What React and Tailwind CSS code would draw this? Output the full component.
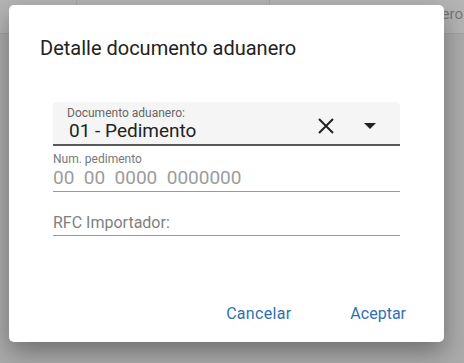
import React from 'react';

const ClearIcon = () => (
  <svg width="18" height="18" viewBox="0 0 18 18" fill="none">
    <path d="M2 2 L16 16 M16 2 L2 16" stroke="#222" strokeWidth="2" />
  </svg>
);

const CaretIcon = () => (
  <svg width="12" height="6" viewBox="0 0 12 6">
    <path d="M0 0 L12 0 L6 6 Z" fill="#222" />
  </svg>
);

const App = () => {
  return (
    <div className="relative w-[464px] h-[363px] overflow-hidden bg-[#ababab]" style={{ fontFamily: 'Roboto, "Liberation Sans", sans-serif' }}>
      {/* Page behind the backdrop */}
      <div className="flex h-[34px] bg-[#b4b4b4] border-b border-[#a2a2a2]">
        <div className="w-[77px] border-r border-[#a6a6a6]" />
        <div className="w-[193px] border-r border-[#a6a6a6]" />
        <div className="flex-1 flex justify-end items-start pt-[5px] pr-[1px] text-[15px] leading-[18px] text-[#777]">
          <span>ero</span>
        </div>
      </div>

      {/* Dialog */}
      <div className="absolute left-[9px] top-[5px] w-[435px] h-[337px] bg-white rounded-[5px] shadow-[0_10px_24px_rgba(0,0,0,0.35)] flex flex-col">
        <h2 className="pl-[31px] pt-[31px] text-[20px] leading-[24px] text-[#222]">
          Detalle documento aduanero
        </h2>

        <div className="mt-[42px] px-[44px] flex flex-col">
          {/* Select field */}
          <div className="h-[44px] bg-[#f5f5f5] rounded-t-[4px] border-b-2 border-[#5a5a5a] flex items-end pl-[14px] pr-[24px]">
            <div className="flex-1 flex flex-col">
              <span className="text-[12px] leading-[14px] text-[#666]">Documento aduanero:</span>
              <span className="text-[19px] leading-[22px] text-[#222] pl-[2px] pb-[2px]">01 - Pedimento</span>
            </div>
            <div className="flex items-center gap-[29px] pb-[9px]">
              <ClearIcon />
              <CaretIcon />
            </div>
          </div>

          {/* Num. pedimento */}
          <div className="pt-[6px] border-b border-[#9a9a9a] pb-[1px]">
            <div className="text-[12px] leading-[14px] text-[#777]">Num. pedimento</div>
            <div className="text-[19px] leading-[24px] text-[#9c9c9c] whitespace-pre">00  00  0000  0000000</div>
          </div>

          {/* RFC Importador */}
          <div className="mt-[21px] border-b border-[#9a9a9a] pb-[2px]">
            <div className="text-[16px] leading-[20px] text-[#808080]">RFC Importador:</div>
          </div>
        </div>

        <div className="mt-auto flex justify-end gap-[59px] pr-[38px] pb-[16px] text-[16px] text-[#2f6fb6]">
          <span className="tracking-[0.3px]">Cancelar</span>
          <span>Aceptar</span>
        </div>
      </div>
    </div>
  );
};

export default App;
